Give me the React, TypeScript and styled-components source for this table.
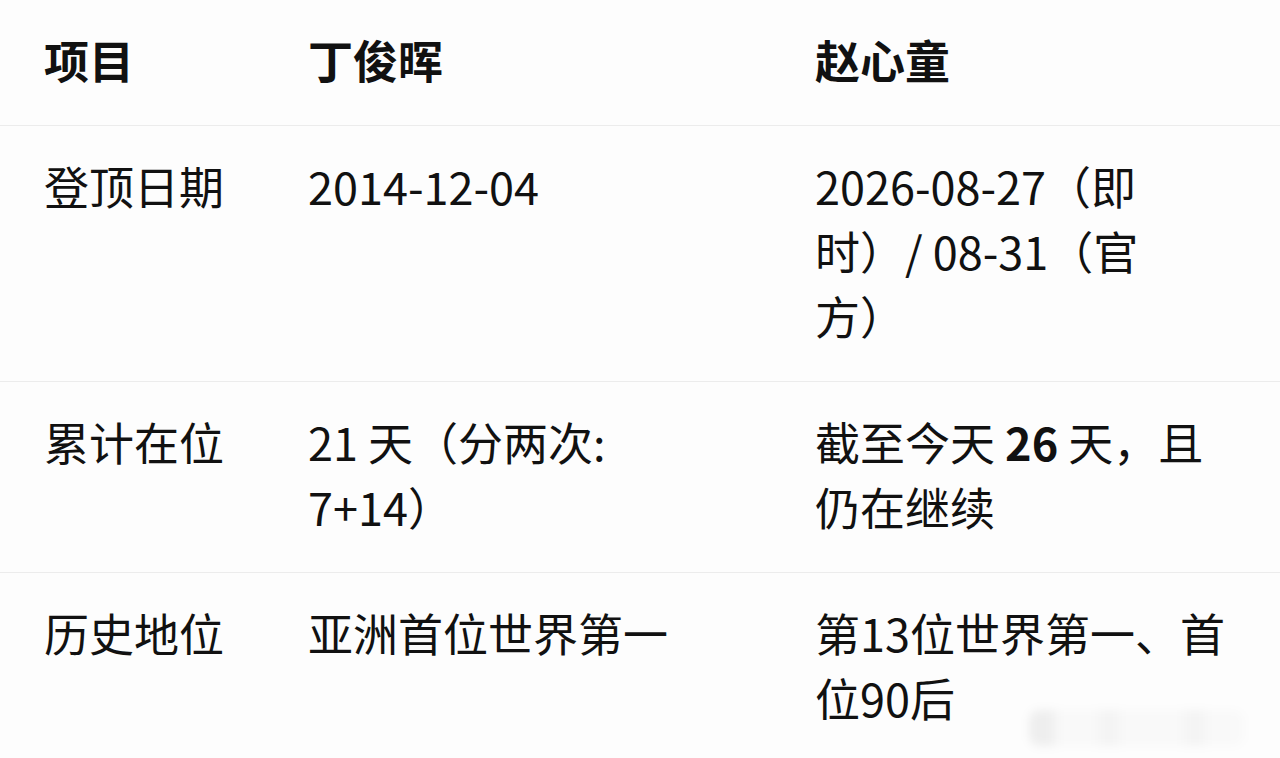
import React from 'react';
import styled, { createGlobalStyle } from 'styled-components';

const Global = createGlobalStyle`
  html, body {
    margin: 0;
    padding: 0;
    background: #fdfdfd;
  }
  body {
    font-family: "Noto Sans CJK SC", "Noto Sans", sans-serif;
    color: #111;
  }
`;

const Page = styled.div`
  position: relative;
  width: 1280px;
  height: 758px;
  overflow: hidden;
  background: #fdfdfd;
`;

const Row = styled.div<{ $last?: boolean }>`
  display: grid;
  grid-template-columns: 308px 507px 1fr;
  border-bottom: ${({ $last }) => ($last ? 'none' : '1px solid #ececec')};
`;

const Cell = styled.div<{ $head?: boolean; $pl?: number; $pr?: number }>`
  padding: 27px ${({ $pr }) => $pr ?? 0}px 33px ${({ $pl }) => $pl ?? 0}px;
  font-size: 45px;
  line-height: 65px;
  font-weight: ${({ $head }) => ($head ? 700 : 400)};
  text-spacing-trim: space-all;
`;

const B = styled.b`
  font-weight: 700;
`;

// 右下角模糊水印
const Mark = styled.div`
  position: absolute;
  right: 36px;
  bottom: 12px;
  width: 215px;
  height: 36px;
  background: linear-gradient(
    90deg,
    rgba(0, 0, 0, 0.06) 0 10%,
    rgba(0, 0, 0, 0.015) 14% 30%,
    rgba(0, 0, 0, 0.035) 34% 40%,
    rgba(0, 0, 0, 0.015) 44% 70%,
    rgba(0, 0, 0, 0.035) 74% 80%,
    rgba(0, 0, 0, 0.015) 84% 100%
  );
  filter: blur(5px);
  border-radius: 10px;
`;

type Data = {
  label: string;
  ding: React.ReactNode;
  zhao: React.ReactNode;
  head?: boolean;
};

const rows: Data[] = [
  { label: '项目', ding: '丁俊晖', zhao: '赵心童', head: true },
  {
    label: '登顶日期',
    ding: '2014-12-04',
    zhao: (
      <>
        2026-08-27（即
        <br />
        时）/ 08-31（官
        <br />
        方）
      </>
    ),
  },
  {
    label: '累计在位',
    ding: (
      <>
        21 天（分两次:
        <br />
        7+14）
      </>
    ),
    zhao: (
      <>
        截至今天 <B>26</B> 天，且
        <br />
        仍在继续
      </>
    ),
  },
  {
    label: '历史地位',
    ding: '亚洲首位世界第一',
    zhao: (
      <>
        第13位世界第一、首
        <br />
        位90后
      </>
    ),
  },
];

export default function App(): React.JSX.Element {
  return (
    <Page>
      <Global />
      {rows.map((r, i) => (
        <Row key={r.label} $last={i === rows.length - 1}>
          <Cell $head={r.head} $pl={44}>
            {r.label}
          </Cell>
          <Cell $head={r.head} $pr={60}>
            {r.ding}
          </Cell>
          <Cell $head={r.head} $pr={20}>
            {r.zhao}
          </Cell>
        </Row>
      ))}
      <Mark />
    </Page>
  );
}
